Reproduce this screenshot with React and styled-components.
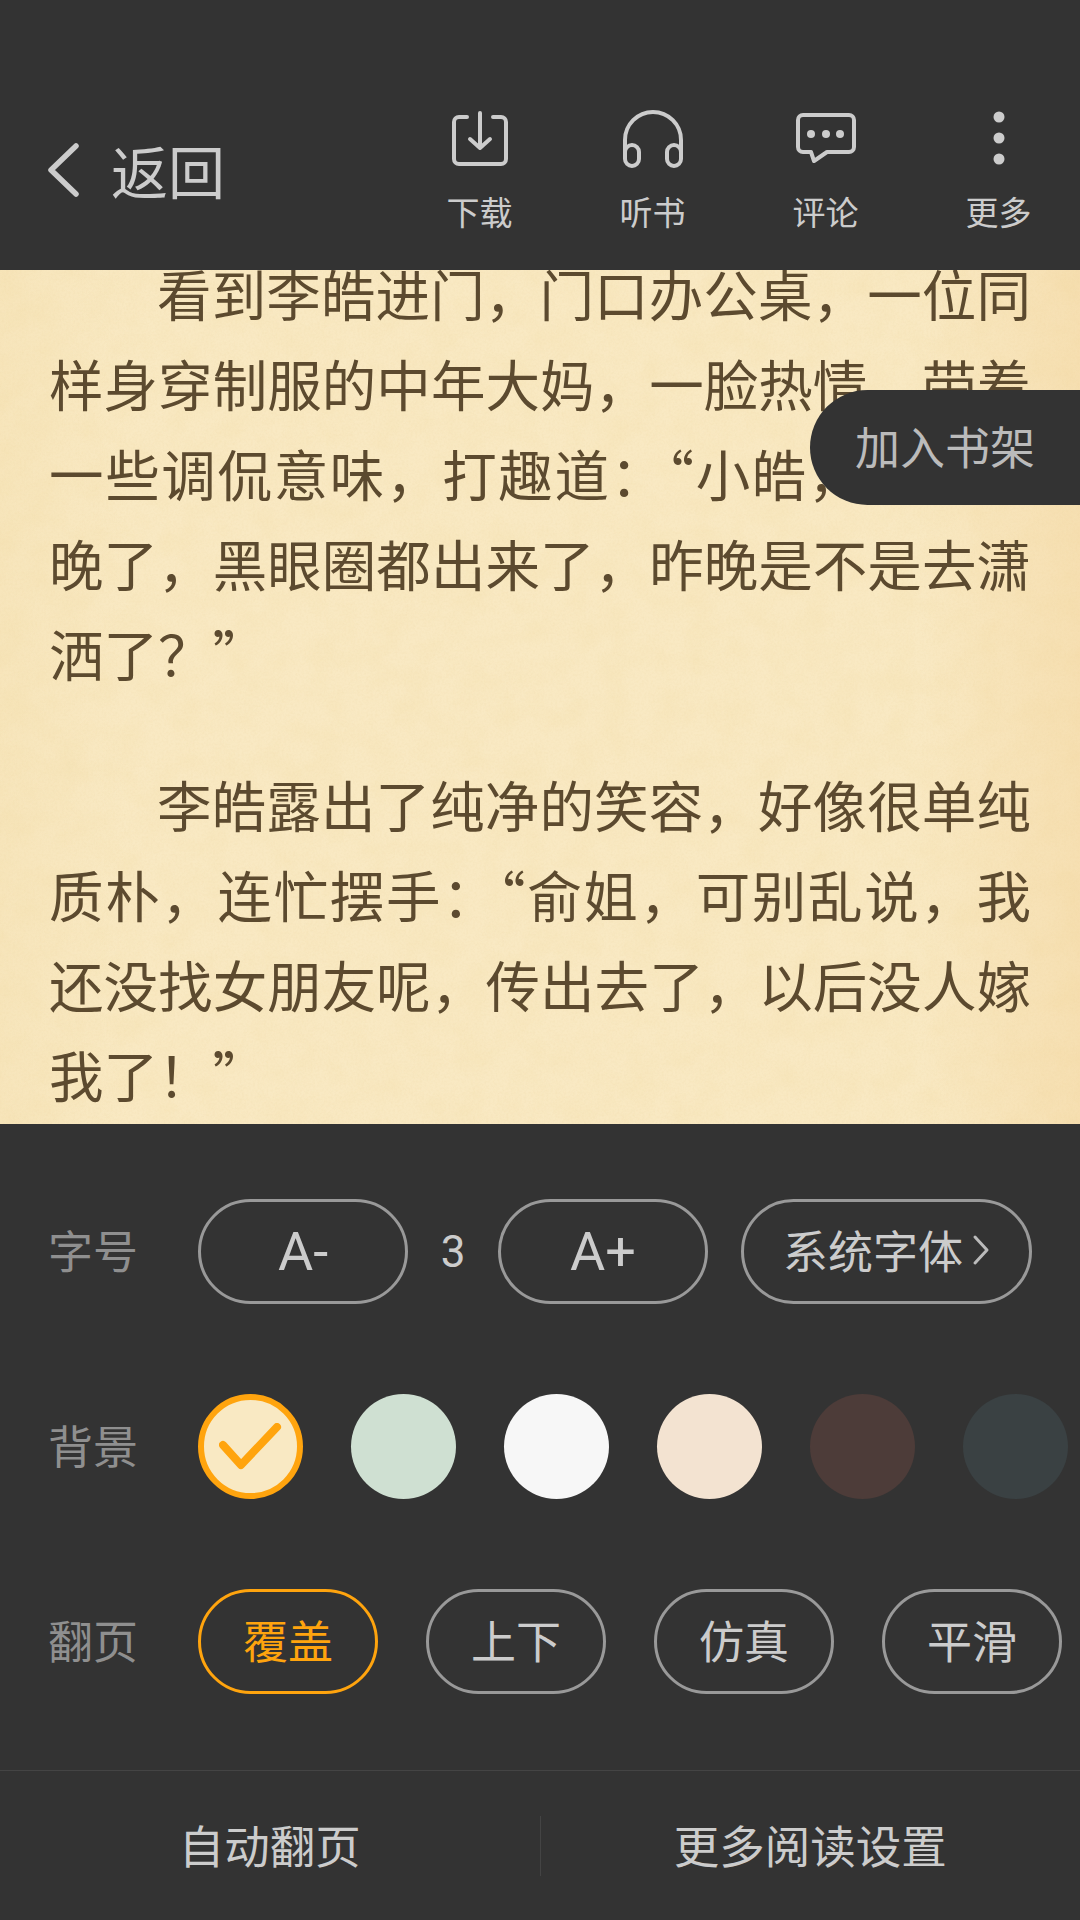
import React from "react";
import styled, { createGlobalStyle } from "styled-components";

const Global = createGlobalStyle`
  html, body { margin: 0; padding: 0; background: #333; }
  * { box-sizing: border-box; }
  body { font-family: "Noto Sans CJK SC", "Liberation Sans", sans-serif; }
`;

const Page = styled.div`
  width: 1080px;
  height: 1920px;
  display: flex;
  flex-direction: column;
  position: relative;
  overflow: hidden;
  background: #333;
`;

const Header = styled.header`
  height: 270px;
  flex: none;
  background: #333;
  display: flex;
  align-items: flex-start;
  justify-content: space-between;
  padding: 110px 0 0 46px;
`;

const Back = styled.div`
  display: flex;
  align-items: center;
  gap: 31px;
  margin-top: 29px;
  color: #ccc;
  font-size: 57px;
  line-height: 60px;
`;

const Actions = styled.div`
  display: flex;
  width: 692px;
  margin-right: -5px;
`;

const Action = styled.div`
  width: 173px;
  display: flex;
  flex-direction: column;
  align-items: center;
  color: #ccc;
  font-size: 33px;
  line-height: 40px;
  svg { display: block; margin-bottom: 23px; }
`;

const Reader = styled.main`
  height: 854px;
  flex: none;
  position: relative;
  overflow: hidden;
  background: #f9e9c3;
`;

const Paper = styled.svg`
  position: absolute;
  inset: 0;
  width: 100%;
  height: 100%;
`;

const Text = styled.div`
  position: relative;
  margin: -22px 49px 0;
  font-size: 54.5px;
  line-height: 90px;
  color: #5c4a2f;
`;

const Para = styled.p`
  margin: 0 0 61px;
`;

const Line = styled.span`
  display: block;
  white-space: nowrap;
  text-align: ${(p) => (p.$last ? "left" : "justify")};
  text-align-last: ${(p) => (p.$last ? "left" : "justify")};
  text-justify: inter-character;
  padding-left: ${(p) => (p.$indent ? "108px" : "0")};
`;

const Shelf = styled.div`
  position: absolute;
  right: 0;
  top: 120px;
  width: 270px;
  height: 115px;
  border-radius: 58px 0 0 58px;
  background: #333;
  color: #bbb;
  font-size: 45px;
  display: flex;
  align-items: center;
  padding: 0 0 4px 45px;
`;

const Panel = styled.section`
  flex: 1;
  display: flex;
  flex-direction: column;
  background: #333;
`;

const Row = styled.div`
  display: flex;
  align-items: center;
  height: 105px;
  padding-left: 48px;
  margin-top: ${(p) => p.$top}px;
`;

const RowLabel = styled.div`
  width: 150px;
  flex: none;
  padding-bottom: 4px;
  color: #8f8f8f;
  font-size: 45px;
`;

const Pill = styled.div`
  height: 105px;
  width: ${(p) => p.$w}px;
  flex: none;
  margin-right: ${(p) => p.$gap || 0}px;
  padding-bottom: 4px;
  border: 3px solid ${(p) => (p.$active ? "#ffa40e" : "#999")};
  border-radius: 53px;
  color: ${(p) => (p.$active ? "#ffa40e" : "#ccc")};
  font-size: 45px;
  display: flex;
  align-items: center;
  justify-content: center;
  gap: 9px;
`;

const SizePill = styled(Pill)`
  padding-bottom: 0;
  font-family: Roboto, sans-serif;
  font-size: 54px;
`;

const Step = styled.div`
  width: 90px;
  flex: none;
  text-align: center;
  color: #ccc;
  font-family: Roboto, sans-serif;
  font-size: 44px;
`;

const Swatch = styled.div`
  width: 105px;
  height: 105px;
  flex: none;
  margin-right: 48px;
  border-radius: 50%;
  background: ${(p) => p.$c};
  border: ${(p) => (p.$active ? "6px solid #ffa40e" : "none")};
  display: flex;
  align-items: center;
  justify-content: center;
`;

const Footer = styled.footer`
  margin-top: 76px;
  height: 151px;
  border-top: 1px solid #444;
  display: flex;
  align-items: center;
`;

const FootItem = styled.div`
  flex: 1;
  height: 60px;
  display: flex;
  align-items: center;
  justify-content: center;
  padding-bottom: 4px;
  color: #ccc;
  font-size: 45.5px;
  & + & { border-left: 1px solid #444; }
`;

const stroke = { fill: "none", stroke: "#ccc", strokeWidth: 4, strokeLinecap: "round", strokeLinejoin: "round" };

const DownloadIcon = () => (
  <svg width="60" height="58" viewBox="0 0 60 58">
    <path {...stroke} d="M17 7H9a5 5 0 0 0-5 5v37a5 5 0 0 0 5 5h42a5 5 0 0 0 5-5V12a5 5 0 0 0-5-5h-8" />
    <path {...stroke} d="M30 3v35M20 29l10 9 10-9" />
  </svg>
);
const HeadphoneIcon = () => (
  <svg width="60" height="58" viewBox="0 0 60 58">
    <path {...stroke} d="M2 43V30a28 28 0 0 1 56 0v13" />
    <rect {...stroke} x="2" y="35" width="14" height="21" rx="7" />
    <rect {...stroke} x="44" y="35" width="14" height="21" rx="7" />
  </svg>
);
const CommentIcon = () => (
  <svg width="60" height="58" viewBox="0 0 60 58">
    <path {...stroke} d="M7 5h46a5 5 0 0 1 5 5v27a5 5 0 0 1-5 5H31l-13 9-3-9H7a5 5 0 0 1-5-5V10a5 5 0 0 1 5-5z" />
    <circle cx="15" cy="24" r="4" fill="#ccc" />
    <circle cx="30" cy="24" r="4" fill="#ccc" />
    <circle cx="44" cy="24" r="4" fill="#ccc" />
  </svg>
);
const MoreIcon = () => (
  <svg width="60" height="58" viewBox="0 0 60 58">
    <circle cx="30" cy="7" r="5.5" fill="#ccc" />
    <circle cx="30" cy="28" r="5.5" fill="#ccc" />
    <circle cx="30" cy="49" r="5.5" fill="#ccc" />
  </svg>
);

const chapters = [
  [
    { t: "看到李皓进门，门口办公桌，一位同", indent: true },
    { t: "样身穿制服的中年大妈，一脸热情，带着" },
    { t: "一些调侃意味，打趣道：“小皓，今天来" },
    { t: "晚了，黑眼圈都出来了，昨晚是不是去潇" },
    { t: "洒了？”", last: true },
  ],
  [
    { t: "李皓露出了纯净的笑容，好像很单纯", indent: true },
    { t: "质朴，连忙摆手：“俞姐，可别乱说，我" },
    { t: "还没找女朋友呢，传出去了，以后没人嫁" },
    { t: "我了！”", last: true },
  ],
];

const actions = [
  ["下载", DownloadIcon],
  ["听书", HeadphoneIcon],
  ["评论", CommentIcon],
  ["更多", MoreIcon],
];

const swatches = ["#cfe0d2", "#f7f7f7", "#f3e3d1", "#4d3c39", "#3a4143"];

export default function App() {
  return (
    <Page lang="zh-CN">
      <Global />
      <Header>
        <Back>
          <svg width="34" height="60" viewBox="0 0 34 60">
            <path d="M30 7L5 31l25 24" fill="none" stroke="#ccc" strokeWidth="5.5" strokeLinecap="round" strokeLinejoin="round" />
          </svg>
          返回
        </Back>
        <Actions>
          {actions.map(([label, Icon]) => (
            <Action key={label}>
              <Icon />
              {label}
            </Action>
          ))}
        </Actions>
      </Header>
      <Reader>
        <Paper aria-hidden="true">
          <defs>
            <filter id="mottle" x="0" y="0" width="100%" height="100%">
              <feTurbulence type="fractalNoise" baseFrequency="0.035" numOctaves="5" seed="11" />
              <feColorMatrix values="0 0 0 0 0.90  0 0 0 0 0.74  0 0 0 0 0.42  1.6 0.6 0 0 -0.85" />
            </filter>
            <filter id="grain" x="0" y="0" width="100%" height="100%">
              <feTurbulence type="fractalNoise" baseFrequency="0.45" numOctaves="2" seed="4" />
              <feColorMatrix values="0 0 0 0 0.85  0 0 0 0 0.68  0 0 0 0 0.38  1.2 0 0 0 -0.45" />
            </filter>
            <linearGradient id="side" x1="0" x2="1" y1="0" y2="0">
              <stop offset="0" stopColor="#efd69c" stopOpacity="0.2" />
              <stop offset="0.12" stopColor="#efd69c" stopOpacity="0" />
              <stop offset="0.85" stopColor="#f0c98a" stopOpacity="0" />
              <stop offset="1" stopColor="#f0c98a" stopOpacity="0.3" />
            </linearGradient>
          </defs>
          <rect width="100%" height="100%" filter="url(#mottle)" opacity="0.35" />
          <rect width="100%" height="100%" filter="url(#grain)" opacity="0.35" />
          <rect width="100%" height="100%" fill="url(#side)" />
        </Paper>
        <Text>
          {chapters.map((lines, i) => (
            <Para key={i}>
              {lines.map((l) => (
                <Line key={l.t} $indent={l.indent} $last={l.last}>
                  {l.t}
                </Line>
              ))}
            </Para>
          ))}
        </Text>
        <Shelf>加入书架</Shelf>
      </Reader>
      <Panel>
        <Row $top={75}>
          <RowLabel>字号</RowLabel>
          <SizePill $w={210}>A-</SizePill>
          <Step>3</Step>
          <SizePill $w={210} $gap={33}>A+</SizePill>
          <Pill $w={291}>
            系统字体
            <svg width="18" height="32" viewBox="0 0 18 32">
              <path d="M3 3l12 13L3 29" fill="none" stroke="#bbb" strokeWidth="3" strokeLinecap="round" strokeLinejoin="round" />
            </svg>
          </Pill>
        </Row>
        <Row $top={90}>
          <RowLabel>背景</RowLabel>
          <Swatch $c="#f9e9c3" $active>
            <svg width="64" height="48" viewBox="0 0 64 48">
              <path d="M4 22l18 20L58 4" fill="none" stroke="#ffa40e" strokeWidth="8" strokeLinecap="round" strokeLinejoin="round" />
            </svg>
          </Swatch>
          {swatches.map((c) => (
            <Swatch key={c} $c={c} />
          ))}
        </Row>
        <Row $top={90}>
          <RowLabel>翻页</RowLabel>
          <Pill $w={180} $gap={48} $active>覆盖</Pill>
          <Pill $w={180} $gap={48}>上下</Pill>
          <Pill $w={180} $gap={48}>仿真</Pill>
          <Pill $w={180}>平滑</Pill>
        </Row>
        <Footer>
          <FootItem>自动翻页</FootItem>
          <FootItem>更多阅读设置</FootItem>
        </Footer>
      </Panel>
    </Page>
  );
}
